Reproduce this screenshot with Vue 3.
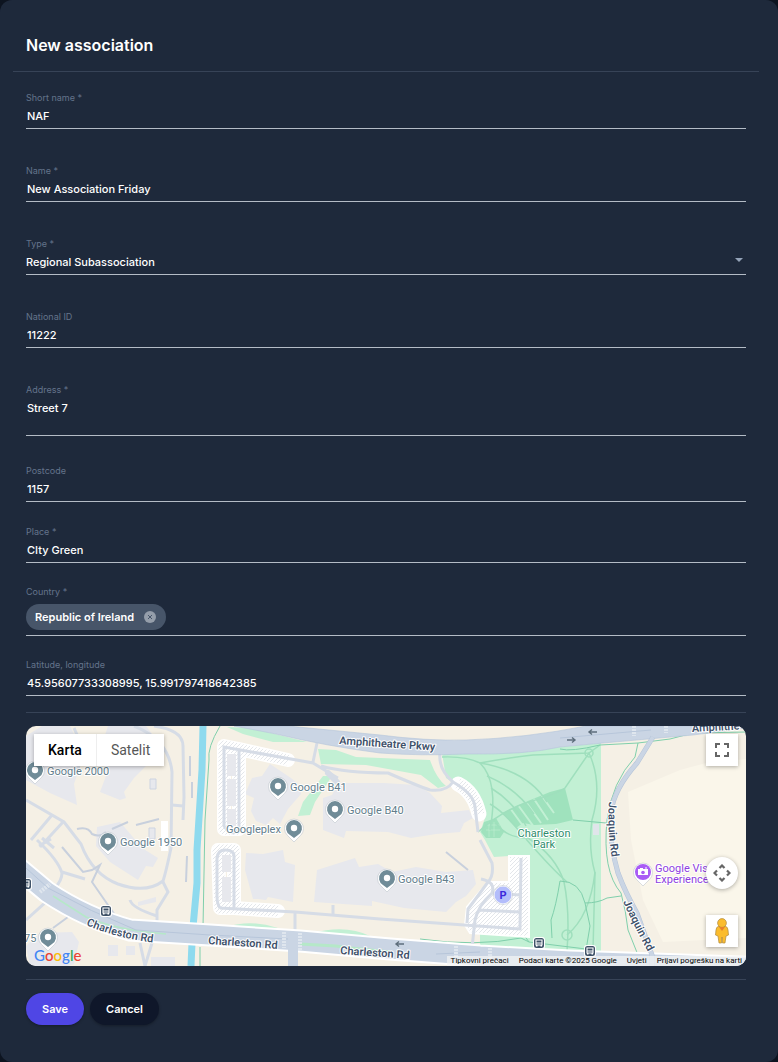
<template>
  <div class="page">
    <form class="dialog" @submit.prevent="handleSave">
      <header class="dialog-header">
        <h1>New association</h1>
      </header>

      <div class="dialog-body">
        <div class="field">
          <label for="short-name">Short name *</label>
          <input id="short-name" v-model="form.shortName" type="text" />
        </div>
        <div class="field">
          <label for="name">Name *</label>
          <input id="name" v-model="form.name" type="text" />
        </div>
        <div class="field field-select">
          <label for="type">Type *</label>
          <select id="type" v-model="form.type">
            <option v-for="type in types" :key="type" :value="type">{{ type }}</option>
          </select>
          <svg class="select-arrow" viewBox="0 0 8 4" aria-hidden="true"><path d="M0 0h8L4 4z" /></svg>
        </div>
        <div class="field">
          <label for="national-id">National ID</label>
          <input id="national-id" v-model="form.nationalId" type="text" />
        </div>
        <div class="field">
          <label for="address">Address *</label>
          <textarea id="address" v-model="form.address"></textarea>
        </div>
        <div class="field field-postcode">
          <label for="postcode">Postcode</label>
          <input id="postcode" v-model="form.postcode" type="text" />
        </div>
        <div class="field field-compact">
          <label for="place">Place *</label>
          <input id="place" v-model="form.place" type="text" />
        </div>
        <div class="field field-compact">
          <label for="country">Country *</label>
          <div class="chips">
            <span v-for="country in form.countries" :key="country" class="chip">
              {{ country }}
              <button type="button" :aria-label="`Remove ${country}`" @click="removeCountry(country)">
                <svg viewBox="0 0 12 12"><circle cx="6" cy="6" r="6" /><path d="M4 4l4 4M8 4l-4 4" /></svg>
              </button>
            </span>
            <input id="country" type="text" />
          </div>
        </div>
        <div class="field field-compact">
          <label for="coordinates">Latitude, longitude</label>
          <input id="coordinates" v-model="form.coordinates" type="text" />
        </div>

        <div class="map">
          <svg class="map-canvas" viewBox="0 0 720 240" preserveAspectRatio="xMidYMid slice">
            <defs>
              <pattern id="hatch" width="4" height="4" patternUnits="userSpaceOnUse">
                <rect width="4" height="4" fill="#fff" />
                <path d="M-1 5L5 -1" stroke="#dcdfe5" stroke-width="0.8" />
              </pattern>
              <path id="charleston-west" d="M60 199Q92 213 132 217" />
              <path id="joaquin-north" d="M583 76Q581 102 586 134" />
              <path id="joaquin-south" d="M597 176Q606 196 622 226" />
            </defs>
            <rect width="720" height="240" fill="#f5f0e5" />
            <path d="M602 66L654 44L680 37L720 33V212L637 216L617 174L605 114Z" fill="#faf6ea" />

            <!-- Park and lawns -->
            <g fill="#c2f0d4">
              <path d="M416 27L440 28L500 26L534 21L575 17V227L454 221V208H503V130H483L468 131L459 114L454 106L459 92L440 65L420 52Z" />
              <path d="M201 1L225 2L281 16L247 16L217 8Z" />
              <path d="M292 23L310 24L330 31L404 34Q410 52 420 60L412 62L395 49L340 39L295 38Z" />
              <path d="M297 50H306L289 76L284 89L272 90L277 76Z" />
              <path d="M200 201Q225 193 252 202ZM286 207Q320 198 344 210Z" />
            </g>
            <path d="M476 87L497 77L524 66L539 62L547 94L530 98L508 99L497 97L490 102Z" fill="#9fe2bd" />
            <path d="M458 96L470 92L478 106L474 112L460 112L455 106Z" fill="#9fe2bd" />
            <g stroke="#c2f0d4" stroke-width="2" fill="none">
              <path d="M484 82L500 104M492 79L508 101M500 76L515 97M508 73L522 94M516 70L528 87" />
              <path d="M460 99h14M460 104h14M463 96v15M468 96v15" stroke-width="0.6" />
            </g>
            <g class="trail-wide">
              <path d="M416 31Q440 30 454 37Q480 32 507 29L563 27L574 19" />
              <path d="M454 37Q473 56 464 104" />
              <path d="M454 37Q502 45 521 76" />
              <path d="M461 50Q490 62 508 88" />
              <path d="M465 62Q488 76 500 100" />
              <path d="M464 78Q478 86 494 106" />
              <path d="M452 106Q478 83 503 76Q533 67 539 62L563 27Q577 58 566 94Q562 122 569 147L567 224" />
              <path d="M470 97Q480 112 502 112Q530 130 538 156Q544 185 541 225" />
              <path d="M500 113Q526 143 541 156M541 209Q564 190 569 146" />
              <circle cx="563" cy="27" r="4" /><circle cx="541" cy="209" r="5" />
            </g>
            <g class="trail">
              <path d="M194 0Q181 22 183 34L179 94L177 201M174 221V240" />
              <path d="M534 23Q545 26 574 19L612 17L644 13L667 7L720 6M612 17L609 31Q586 56 581 94Q576 145 595 167Q600 185 602 204L612 229L611 235" />
              <path d="M547 94L580 97M534 155Q554 155 559 177Q572 177 581 172L595 170M559 177L564 200L560 224" />
              <path d="M534 155Q530 180 525 194L526 212M394 213Q450 221 495 212L503 216M495 205L503 216L560 223" />
            </g>
            <rect x="567" y="98" width="6" height="11" fill="#e0e5ea" />

            <!-- Buildings -->
            <g fill="#e7e8ed">
              <path d="M16 0H44L54 20V40L48 58L51 79L24 67L0 54V10Z" />
              <path d="M82 0H120L132 16L124 36L108 52L98 66L100 72L94 74L74 66L80 50L74 24Z" />
              <path d="M71 101L94 96L106 110L116 122L132 132L127 141L120 140L112 154L84 136L70 120Z" />
              <path d="M14 207L46 206L53 216L48 238L42 240H4L0 220Z" />
              <path d="M244 38L265 52L272 58L275 68L262 83L254 98L247 92L240 99L230 95L225 85L228 72L219 68L226 52L236 50Z" />
              <path d="M297 72L306 69L312 57H358L390 59L404 67L416 80L415 87L443 84L447 92L438 97L434 106L410 108L385 112L362 106L320 105L318 112L297 104Z" />
              <path d="M220 127L237 128L257 124L259 136L269 139L267 176L242 171L240 174L232 173L227 173L219 144Z" />
              <path d="M291 144L329 132L333 141L352 138L366 146L390 141L420 146L447 144L450 158L440 170L430 176L420 186L378 182L346 175V180L288 176Z" />
              <path d="M82 219H92V230H82ZM100 220H109V229H100ZM125 231H149V240H125Z" />
            </g>
            <g fill="#e7e8ed" stroke="#cdd4e1">
              <path d="M124 53h6v10h-6zM123 102h6v11h-6z" />
              <path d="M112 176l18-5v5l-18 4z" stroke="none" />
            </g>

            <!-- Parking lots -->
            <g fill="none" stroke="#fff" stroke-linecap="round" stroke-linejoin="round">
              <path d="M198 20L213 23V103H198ZM213 23L262 34M192 124H208V182H194ZM208 182L252 185" stroke-width="14" />
              <path d="M432 58Q448 66 453 88" stroke-width="15" />
            </g>
            <g fill="none" stroke="url(#hatch)" stroke-linejoin="round">
              <path d="M198 20L213 23V103H198ZM213 23L262 34M192 124H208V182H194ZM208 182L252 185" stroke-width="11" />
              <path d="M432 58Q448 66 453 88" stroke-width="11" />
            </g>
            <path d="M483 130H503V211L444 207L439 199L441 181L462 156H483Z" fill="url(#hatch)" stroke="#fff" stroke-width="2" />
            <rect x="135" y="95" width="7" height="30" fill="#fff" />
            <path d="M201 28H210V50H201ZM201 53H210V80H201ZM201 83H210V100H201ZM196 129H205V146H196ZM196 151H205V176H196Z" fill="#e7e8ed" />

            <!-- Service roads -->
            <g class="lane">
              <path d="M108 0Q143 14 146 46L145 122Q140 146 137 155Q120 168 92 158Q66 148 55 118L38 96L0 74" />
              <path d="M128 0Q157 4 157 20L158 71L157 94M146 79L157 80M137 156L142 166L131 184V202M104 174Q106 182 131 190" />
              <path d="M37 96L14 121M26 89L5 114M16 112L28 122M11 114Q32 134 36 147Q36 154 29 162M13 120L25 113M36 146L59 153" />
              <path d="M48 2Q60 26 50 48M0 194L20 176L34 185" />
              <path d="M114 217L119 240L126 217" />
              <path d="M291 17L287 36M213 103Q206 112 198 100V21L287 37Q310 51 312 52M295 40Q320 47 362 47Q392 60 404 64Q420 66 427 56" />
              <path d="M213 24V103M414 27Q412 43 427 56Q448 68 449 81L452 106M454 114L466 137Q468 150 462 156Q446 178 442 183L441 197" />
              <path d="M194 182Q191 178 191 170V132Q192 124 199 124Q208 124 208 130V182M194 182L269 186L354 193L494 203L495 132M269 186V208M307 179V188" />
              <path d="M452 184L494 186M446 222L449 194Q452 180 466 167L494 169M466 167Q470 156 455 153" />
            </g>
            <path d="M302 47L311 56" stroke="#d6dce6" stroke-width="6" stroke-linecap="round" />
            <g class="lane-thin">
              <path d="M36 121L57 146L66 144L74 139L66 156L91 192M42 191L27 202M51 103Q62 100 66 108Q74 112 80 106M86 103L102 96M110 99L133 93M420 126L442 144M164 30V50M166 56V72M161 130L160 156" />
            </g>

            <!-- River -->
            <path d="M177 0L176 44L171 124V157L167 201M166 217L165 240" fill="none" stroke="#8edaee" stroke-width="7" />

            <!-- Main roads -->
            <g fill="none" stroke="#fff" stroke-width="23">
              <path d="M-10 140L21 166Q60 192 104 204L184 209L274 215L364 223L454 230L544 235L740 242" />
            </g>
            <g fill="none" stroke="#cad5e4" stroke-width="19">
              <path d="M-10 140L21 166Q60 192 104 204L184 209L274 215L364 223L454 230L544 235L740 242" />
              <path d="M267 208V240" stroke-width="10" />
            </g>
            <path d="M208 0H262L354 9Q400 15 440 14Q500 12 560 0H720V2L667 9L577 17L534 21Q500 29 440 28Q395 30 354 27Q300 20 250 8Z" fill="#cad5e4" stroke="#b4c4da" stroke-width="0.6" />
            <path d="M627 11L611 37Q588 63 585 86Q582 112 592 147Q600 168 611 187L626 229V240" fill="none" stroke="#b5c4d8" stroke-width="5" />
            <path d="M627 11L611 37Q588 63 585 86Q582 112 592 147Q600 168 611 187L626 229V240" fill="none" stroke="#cad5e4" stroke-width="4" />
            <g fill="none" stroke-width="1.5">
              <path d="M27 170L60 191Q80 200 112 205L140 208" stroke="#b5e8c8" />
              <path d="M274 218L310 220L330 223M325 222L364 226" stroke="#b5e8c8" stroke-width="3" />
              <path d="M0 142L22 162Q65 186 110 204L184 209L262 213M410 228L454 226M534 12L625 4" stroke="#b7c6da" stroke-width="1" />
              <path d="M14 166L24 158M258 206V222M274 207V225M430 220V234M464 222V234M608 0V10M640 0V7" stroke="#dfe6ee" stroke-width="4" stroke-dasharray="2 1" />
            </g>

            <!-- Direction arrows -->
            <g fill="none" stroke="#5e6e7c" stroke-width="1.4">
              <path d="M541 14h8M546 11.500l3 2.500l-3 2.500" />
              <path d="M571 6h-8M566 3.500l-3 2.500l3 2.500" />
              <path d="M378 218h-8M373 215.500l-3 2.500l3 2.500" />
            </g>

            <!-- Bus stops -->
            <g v-for="stop in busStops" :key="stop.x" :transform="`translate(${stop.x} ${stop.y})`">
              <rect x="-6" y="-6" width="12" height="12" rx="3" fill="#fff" />
              <rect x="-5" y="-5" width="10" height="10" rx="2.5" fill="#3f5268" />
              <path d="M-3 -3h6v5h-6zM-3 3h1.500M1.500 3h1.500" fill="none" stroke="#fff" stroke-width="1.1" />
              <path d="M-3 0h6" stroke="#fff" />
            </g>

            <!-- Street names -->
            <g class="street">
              <text transform="translate(313 18) rotate(4)">Amphitheatre Pkwy</text>
              <text transform="translate(666 6) rotate(-3)">Amphithe</text>
              <text><textPath href="#charleston-west">Charleston Rd</textPath></text>
              <text transform="translate(182 218) rotate(4)">Charleston Rd</text>
              <text transform="translate(314 228) rotate(4)">Charleston Rd</text>
              <text><textPath href="#joaquin-north">Joaquin Rd</textPath></text>
              <text><textPath href="#joaquin-south">Joaquin Rd</textPath></text>
            </g>

            <!-- Places -->
            <g v-for="place in places" :key="place.name">
              <g :transform="`translate(${place.x} ${place.y})`">
                <path class="pin-edge" d="M0 14L-6.500 7.500A9.500 9.500 0 1 1 6.500 7.500Z" />
                <path d="M0 10L-4 7A8 8 0 1 1 4 7Z" fill="#708c98" />
                <circle r="3.200" fill="#fff" />
              </g>
              <text class="poi" :x="place.textX" :y="place.textY">{{ place.name }}</text>
            </g>
            <text class="poi poi-park" x="518" y="111">Charleston</text>
            <text class="poi poi-park" x="518" y="122">Park</text>
            <g transform="translate(617 146)">
              <path class="pin-edge" d="M0 14L-6.500 7.500A9.500 9.500 0 1 1 6.500 7.500Z" />
              <circle r="8" fill="#a95cf5" />
              <path d="M-5 -3h2v-1h3v1h5v6h-10z" fill="#fff" />
              <circle cy="0.500" r="1.800" fill="#a95cf5" />
              <path d="M3 -5v2" stroke="#fff" />
            </g>
            <text class="poi poi-museum" x="629" y="146">Google Vis</text>
            <text class="poi poi-museum" x="629" y="157">Experience</text>
            <circle class="pin-edge" cx="477" cy="169" r="9.500" />
            <circle cx="477" cy="169" r="8.500" fill="#b3bdfb" />
            <text class="parking" x="477" y="173">P</text>
          </svg>

          <div class="map-types">
            <button type="button" :class="{ active: mapType === 'map' }" @click="mapType = 'map'">Karta</button>
            <button type="button" :class="{ active: mapType === 'satellite' }" @click="mapType = 'satellite'">Satelit</button>
          </div>
          <button type="button" class="map-button fullscreen" aria-label="Fullscreen">
            <svg viewBox="0 0 18 18"><path d="M3 7V3h4M11 3h4v4M15 11v4h-4M7 15H3v-4" fill="none" stroke="#666" stroke-width="2" /></svg>
          </button>
          <button type="button" class="map-button camera" aria-label="Camera controls">
            <svg viewBox="0 0 18 18"><path d="M6.500 4L9 1.500L11.500 4M6.500 14L9 16.500L11.500 14M4 6.500L1.500 9L4 11.500M14 6.500L16.500 9L14 11.500" fill="none" stroke="#666" stroke-width="2.200" /></svg>
          </button>
          <button type="button" class="map-button pegman" aria-label="Street View">
            <svg viewBox="0 0 14 26">
              <path d="M4 8Q1 9 1 12L0.500 17L3 18L4 25H6.500L7 19L7.500 25H10L11 18L13.500 17L13 12Q13 9 10 8Z" fill="#fbbc2d" stroke="#af8a3f" stroke-width="0.700" />
              <circle cx="7" cy="5" r="4.400" fill="#fbbc2d" stroke="#af8a3f" stroke-width="0.700" />
              <path d="M4 9h6l-3 4z" fill="#e8812a" />
            </svg>
          </button>
          <a class="map-logo" href="#" aria-label="Google">
            <span class="blue">G</span><span class="red">o</span><span class="yellow">o</span><span class="blue">g</span><span class="green">l</span><span class="red">e</span>
          </a>
          <div class="map-footer">
            <button type="button">Tipkovni prečaci</button>
            <span>Podaci karte ©2025 Google</span>
            <a href="#">Uvjeti</a>
            <a href="#">Prijavi pogrešku na karti</a>
          </div>
        </div>

        <div class="actions">
          <button type="submit" class="btn btn-primary">Save</button>
          <button type="button" class="btn btn-secondary">Cancel</button>
        </div>
      </div>
    </form>
  </div>
</template>

<script setup>
import { reactive, ref } from 'vue';

const emit = defineEmits(['save']);

// State
const form = reactive({
  shortName: 'NAF',
  name: 'New Association Friday',
  type: 'Regional Subassociation',
  nationalId: '11222',
  address: 'Street 7',
  postcode: '1157',
  place: 'CIty Green',
  countries: ['Republic of Ireland'],
  coordinates: '45.95607733308995, 15.991797418642385'
});

const mapType = ref('map');

const types = ['Regional Subassociation'];

// Map content
const places = [
  { name: 'Google 2000', x: 9, y: 44, textX: 21, textY: 49 },
  { name: 'Google 1950', x: 82, y: 115, textX: 94, textY: 120 },
  { name: 'Google B41', x: 252, y: 60, textX: 264, textY: 65 },
  { name: 'Google B40', x: 309, y: 83, textX: 321, textY: 88 },
  { name: 'Googleplex', x: 268, y: 102, textX: 200, textY: 107 },
  { name: 'Google B43', x: 361, y: 152, textX: 372, textY: 157 },
  { name: '75', x: 22, y: 211, textX: -2, textY: 216 }
];

const busStops = [
  { x: 0, y: 158 },
  { x: 80, y: 185 },
  { x: 513, y: 217 },
  { x: 564, y: 225 }
];

// Methods
const removeCountry = (country) => {
  form.countries = form.countries.filter((item) => item !== country);
};

const handleSave = () => {
  emit('save', { ...form });
};
</script>

<style>
body {
  margin: 0;
  background: #0d1420;
}
</style>

<style scoped>
.page {
  min-height: 100vh;
  display: flex;
  font-family: Inter, "Open Sans", sans-serif;
  color: #fff;
}

.page * {
  box-sizing: border-box;
}

.dialog {
  flex: 1;
  min-width: 0;
  background: #1e293b;
  border-radius: 12px;
  padding: 20px 19px 36px 13px;
}

.dialog-header {
  padding: 12px 13px;
  height: 52px;
  border-bottom: 1px solid #374357;
}

.dialog-header h1 {
  margin: 0;
  font-size: 16px;
  line-height: 26px;
  font-weight: 600;
}

.dialog-body {
  padding: 19px 13px 0;
}

.field {
  display: flex;
  flex-direction: column;
  position: relative;
  border-bottom: 1px solid #b4bcc6;
  margin-bottom: 35px;
}

.field label {
  font-size: 9px;
  line-height: 13px;
  color: #64748b;
}

.field input,
.field select,
.field textarea {
  width: 100%;
  height: 24px;
  margin: 0;
  padding: 0 1px;
  border: none;
  outline: none;
  background: transparent;
  color: #fff;
  font-family: inherit;
  font-size: 11px;
  font-weight: 500;
  line-height: 16px;
}

.field select {
  appearance: none;
  padding: 0;
}

.field textarea {
  height: 39px;
  padding: 4px 1px;
  resize: none;
  overflow: hidden;
}

.select-arrow {
  position: absolute;
  right: 3px;
  bottom: 12px;
  width: 8px;
  height: 4px;
  fill: #94a3b8;
  pointer-events: none;
}

.field-postcode {
  margin-top: -7px;
  margin-bottom: 23px;
}

.field-compact {
  margin-bottom: 22px;
}

.chips {
  display: flex;
  align-items: center;
  padding: 6px 0 5px;
}

.field .chips input {
  flex: 1;
  min-width: 0;
}

.chip {
  display: flex;
  align-items: center;
  gap: 10px;
  height: 26px;
  padding: 0 10px 0 9px;
  border-radius: 13px;
  background: #475569;
  font-size: 11px;
  font-weight: 600;
  white-space: nowrap;
}

.chip button {
  width: 12px;
  height: 12px;
  padding: 0;
  border: none;
  background: transparent;
  cursor: pointer;
}

.chip svg {
  display: block;
  fill: #959eaa;
  stroke: none;
}

.chip path {
  stroke: #475569;
}

.map {
  position: relative;
  height: 240px;
  margin: 30px 0 13px;
  border-radius: 10px;
}

.map::before,
.map::after {
  content: "";
  position: absolute;
  left: 0;
  right: 0;
  border-top: 1px solid #374357;
}

.map::before {
  top: -14px;
}

.map::after {
  bottom: -14px;
}

.map-canvas {
  display: block;
  width: 100%;
  height: 100%;
  border-radius: 10px;
  font-family: Roboto, "Liberation Sans", sans-serif;
}

.trail,
.trail-wide,
.lane,
.lane-thin {
  fill: none;
}

.trail {
  stroke: #7fcfab;
  stroke-width: 1;
}

.trail-wide {
  stroke: #9fdfbd;
  stroke-width: 1.5;
}

.lane {
  stroke: #d6dce6;
  stroke-width: 3;
}

.lane-thin {
  stroke: #c8d0dd;
  stroke-width: 2;
}

.street,
.poi,
.parking {
  font-size: 11px;
  paint-order: stroke;
  stroke: #fff;
  stroke-width: 2px;
  stroke-linejoin: round;
}

.street {
  font-weight: 600;
  fill: #3f526b;
}

.poi {
  fill: #627d8b;
}

.poi-park {
  fill: #2e8d6c;
  text-anchor: middle;
}

.poi-museum {
  fill: #8e3ee0;
}

.parking {
  font-weight: 700;
  fill: #3b28dc;
  stroke: none;
  text-anchor: middle;
}

.pin-edge {
  fill: #fff;
  stroke: #b4bcc4;
  stroke-width: 0.5;
}

.map-types {
  position: absolute;
  top: 8px;
  left: 8px;
  display: flex;
  box-shadow: 0 1px 4px rgba(0, 0, 0, 0.3);
}

.map-types button {
  height: 32px;
  padding: 0 14px;
  border: none;
  background: #fff;
  color: #565656;
  font-family: Roboto, sans-serif;
  font-size: 14px;
  cursor: pointer;
}

.map-types button + button {
  border-left: 1px solid #eee;
}

.map-types .active {
  color: #000;
  font-weight: 500;
}

.map-button {
  position: absolute;
  right: 8px;
  width: 32px;
  height: 32px;
  padding: 0;
  display: flex;
  align-items: center;
  justify-content: center;
  border: none;
  background: #fff;
  box-shadow: 0 1px 4px rgba(0, 0, 0, 0.3);
  cursor: pointer;
}

.map-button svg {
  width: 18px;
  height: 18px;
}

.fullscreen {
  top: 8px;
}

.camera {
  top: 131px;
  border-radius: 50%;
}

.pegman {
  bottom: 19px;
}

.map-button.pegman svg {
  width: 14px;
  height: 26px;
}

.map-logo {
  position: absolute;
  left: 8px;
  bottom: 2px;
  display: flex;
  font-family: Lato, sans-serif;
  font-size: 15px;
  font-weight: 500;
  line-height: 18px;
  text-decoration: none;
}

.blue {
  color: #4285f4;
}

.red {
  color: #ea4335;
}

.yellow {
  color: #fbbc05;
}

.green {
  color: #34a853;
}

.map-footer {
  position: absolute;
  right: 0;
  bottom: 0;
  display: flex;
  gap: 10px;
  padding: 0 4px;
  border-bottom-right-radius: 10px;
  background: rgba(245, 245, 245, 0.7);
  color: #000;
  font-family: Roboto, sans-serif;
  font-size: 8px;
  line-height: 10px;
}

.map-footer button,
.map-footer a {
  padding: 0;
  border: none;
  background: transparent;
  color: inherit;
  font: inherit;
  text-decoration: none;
}

.actions {
  display: flex;
  gap: 6px;
  padding-top: 14px;
}

.btn {
  height: 32px;
  padding: 0 16px;
  border: none;
  border-radius: 16px;
  color: #fff;
  font-family: inherit;
  font-size: 11px;
  font-weight: 600;
  box-shadow: 0 1px 3px rgba(0, 0, 0, 0.3);
  cursor: pointer;
}

.btn-primary {
  background: #4f46e5;
}

.btn-secondary {
  background: #0f172a;
}
</style>
